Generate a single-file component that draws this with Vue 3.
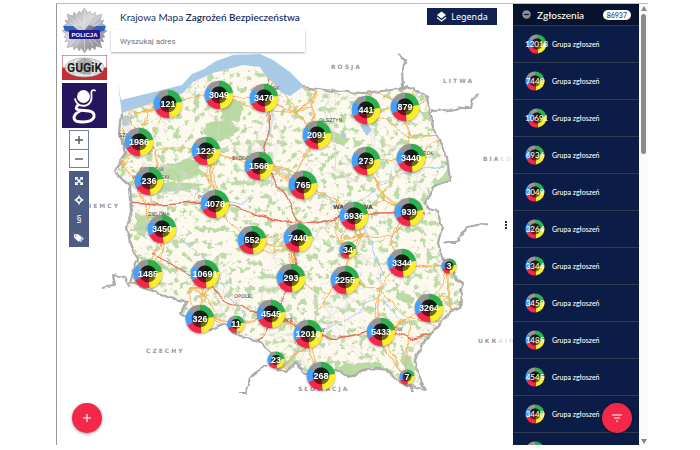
<template>
  <div class="page">
    <div class="frame">
      <!-- Mapa -->
      <main class="map">
        <svg class="map-canvas" viewBox="57 4 456 441" preserveAspectRatio="xMinYMin slice">
          <defs>
            <symbol id="pie" viewBox="-15 -15 30 30">
              <path v-for="part in slices" :key="part.color" :d="part.d" :fill="part.color" />
              <circle r="8.4" fill="#000" opacity="0.55" />
              <path :d="arc(-55, 80, 8.4)" fill="#000" opacity="0.55" />
              <circle r="4.5" fill="#000" opacity="0.45" />
            </symbol>
            <clipPath id="land"><path :d="COUNTRY" /></clipPath>
            <filter id="rough" x="-5%" y="-5%" width="110%" height="110%">
              <feTurbulence type="fractalNoise" baseFrequency="0.12" numOctaves="2" seed="4" />
              <feDisplacementMap in="SourceGraphic" scale="5" xChannelSelector="R" yChannelSelector="G" />
            </filter>
            <filter id="wavy" x="-5%" y="-5%" width="110%" height="110%">
              <feTurbulence type="fractalNoise" baseFrequency="0.05" numOctaves="2" seed="8" />
              <feDisplacementMap in="SourceGraphic" scale="10" xChannelSelector="R" yChannelSelector="G" />
            </filter>
            <filter id="forest" x="0" y="0" width="100%" height="100%" color-interpolation-filters="sRGB">
              <feTurbulence type="fractalNoise" baseFrequency="0.15" numOctaves="5" seed="11" />
              <feColorMatrix values="0 0 0 0 0.74  0 0 0 0 0.86  0 0 0 0 0.66  9 0 0 0 -4.9" />
            </filter>
          </defs>

          <!-- Morze i ląd -->
          <path
            class="sea"
            d="M118 82L121 100L150 93L182 85L192 74L204 69L216 61L233 55L260 54L273 60L290 72L305 87L304 96L280 100L240 90L180 100L122 116Z"
          />
          <path class="land" :d="COUNTRY" />
          <g clip-path="url(#land)">
            <g filter="url(#rough)">
              <path v-for="(d, index) in WOODS" :key="index" class="wood" :d="d" />
            </g>
            <rect x="110" y="50" width="360" height="345" filter="url(#forest)" />
            <g filter="url(#wavy)">
              <path v-for="(d, index) in RIVERS" :key="index" class="river" :d="d" />
              <path class="lake" d="M124 118L132 117L134 124L128 128L123 124ZM360 126L368 124L372 132L366 138ZM340 132L345 136L342 140Z" />
              <path class="minor" :d="minorRoads" />
              <path class="road" :d="roads" />
              <path v-for="(d, index) in HIGHWAYS" :key="index" class="highway" :d="d" />
            </g>
          </g>

          <!-- Granice -->
          <g filter="url(#rough)">
            <path v-for="(d, index) in BORDERS" :key="index" class="border" :d="d" />
          </g>

          <!-- Nazwy -->
          <text v-for="item in COUNTRIES" :key="item.name" class="country" :x="item.x" :y="item.y">{{ item.name }}</text>
          <text
            v-for="item in CITIES"
            :key="item.name"
            class="city"
            :class="{ capital: item.capital }"
            :x="item.x"
            :y="item.y"
          >{{ item.name }}</text>

          <!-- Znaczniki -->
          <g v-for="item in MARKERS" :key="item[2]" class="marker">
            <use
              href="#pie"
              :x="item[0] - (item[3] || 15)"
              :y="item[1] - (item[3] || 15)"
              :width="(item[3] || 15) * 2"
              :height="(item[3] || 15) * 2"
            />
            <text :x="item[0]" :y="item[1] + 3">{{ item[2] }}</text>
          </g>
        </svg>

        <div class="overlay">
          <div class="left">
            <!-- Policja -->
            <svg class="logo-police" viewBox="0 0 45 45" role="img" aria-label="Policja">
              <defs>
                <linearGradient id="silver" x1="0" y1="0" x2="1" y2="1">
                  <stop offset="0" stop-color="#8d9096" />
                  <stop offset="0.4" stop-color="#d9dbde" />
                  <stop offset="0.65" stop-color="#a4a6ac" />
                  <stop offset="1" stop-color="#75787e" />
                </linearGradient>
              </defs>
              <path
                fill="url(#silver)"
                stroke="#9fa2a8"
                stroke-width="0.5"
                d="M22.5 0L26 5L28 3L30 7L33 4L34 8L40 6L38 13L42 12L40 16L43 17L41 20L45 23L41 26L43 29L40 30L42 34L38 33L40 40L34 38L33 42L30 39L28 43L26 40L22.5 45L19 40L17 43L15 39L12 42L11 38L5 40L7 33L3 34L5 30L2 29L4 26L0 23L4 20L2 17L5 16L3 12L7 13L5 6L11 8L12 4L15 7L17 3L19 5Z"
              />
              <path stroke="#e6e8ea" stroke-width="0.6" fill="none" d="M22.5 1V44M6 7L39 39M39 7L6 39M14 7L31 38M31 7L14 38M7 14L39 32M39 14L7 32" />
              <path fill="#c9ccd1" d="M12 19L19 17L22.5 22L16 23Z" />
              <path fill="#777b82" d="M22.5 22L27 17L33 19L29 23Z" />
              <path fill="#2d62b8" d="M1 18L11 18L17 23L28 23L34 18L44 18L42 23L37 24V30H8V24L3 23Z" />
              <rect x="7" y="22" width="31" height="9" rx="1" fill="#24188a" />
              <text class="police-text" x="22.5" y="29">POLICJA</text>
            </svg>

            <!-- GUGiK -->
            <svg class="logo-gugik" viewBox="0 0 45 25" role="img" aria-label="GUGiK">
              <rect width="45" height="25" fill="#c42e36" />
              <rect x="0.5" y="0.5" width="44" height="12" fill="#fff" />
              <ellipse cx="22.5" cy="12.5" rx="19.5" ry="9.5" fill="#ececec" stroke="#999" stroke-width="0.6" />
              <path fill="none" stroke="#aaa" stroke-width="0.5" d="M3 13H42M6 8H39M6 18H39M22.5 3V22M13 4Q6 13 13 21M32 4Q39 13 32 21" />
              <path fill="#777" d="M15 6L22 3L30 5L31 14L28 20L20 19L14 16Z" opacity="0.5" />
              <text class="gugik-text" x="22.5" y="17">GUGiK</text>
            </svg>

            <!-- Geoportal -->
            <svg class="logo-geo" viewBox="0 0 45 45" role="img" aria-label="Geoportal">
              <rect width="45" height="45" fill="#25155f" />
              <g fill="none" stroke="#fff" stroke-linecap="round">
                <circle cx="21.5" cy="13.5" r="6.5" fill="#fff" stroke="none" />
                <path stroke-width="1.8" d="M33 7.500Q28.500 6 29.500 12Q30.500 20 24 22.500Q15 24 13 16" />
                <path stroke-width="3" d="M16 22Q12 26 17 27L27 28Q33 29 32 34Q30 39 21 39Q12 39 12 35Q12 31 18 28" />
              </g>
            </svg>

            <div class="controls">
              <!-- Zoom -->
              <div class="zoom">
                <button type="button" aria-label="Przybliż">
                  <svg viewBox="0 0 10 10"><path d="M5 1V9M1 5H9" stroke="#555" stroke-width="1.4" /></svg>
                </button>
                <button type="button" aria-label="Oddal">
                  <svg viewBox="0 0 10 10"><path d="M1 5H9" stroke="#555" stroke-width="1.4" /></svg>
                </button>
              </div>

              <!-- Narzędzia -->
              <div class="tools">
                <button type="button" aria-label="Pełny zasięg">
                  <svg viewBox="0 0 10 10">
                    <path d="M1 1H4.3L3.3 2.3L5 4L6.7 2.3L5.7 1H9V4.3L7.7 3.3L6 5L7.7 6.7L9 5.7V9H5.7L6.7 7.7L5 6L3.3 7.7L4.3 9H1V5.7L2.3 6.7L4 5L2.3 3.3L1 4.3Z" fill="#fff" />
                  </svg>
                </button>
                <button type="button" aria-label="Moja lokalizacja">
                  <svg viewBox="0 0 10 10">
                    <circle cx="5" cy="5" r="2.3" fill="none" stroke="#fff" stroke-width="1.5" />
                    <path d="M5 0.6V2.6M5 7.4V9.4M0.6 5H2.6M7.4 5H9.4" stroke="#fff" stroke-width="1.6" />
                  </svg>
                </button>
                <button type="button" class="law">§</button>
                <button type="button" aria-label="Kategorie">
                  <svg viewBox="0 0 10 10">
                    <path d="M0 1.2H4L8 5.2L4.6 8.8L0 4.6ZM5.2 1.4L9.8 5.6L6.4 9.2L5.6 8.6L8.7 5.4L4.7 1.4Z" fill="#fff" />
                    <circle cx="1.8" cy="2.9" r="0.7" fill="#4d5c83" />
                  </svg>
                </button>
              </div>
            </div>
          </div>

          <div class="heading">
            <h1>Krajowa Mapa <b>Zagrożeń Bezpieczeństwa</b></h1>
            <input v-model="address" class="search" type="text" placeholder="Wyszukaj adres" aria-label="Wyszukaj adres" />
          </div>

          <button type="button" class="legend">
            <svg viewBox="0 0 12 12">
              <path d="M6 0.5L11 4.4L6 8.3L1 4.4Z" fill="#fff" />
              <path d="M1 7L6 10.9L11 7" fill="none" stroke="#fff" stroke-width="1.3" />
            </svg>
            Legenda
          </button>
        </div>

        <button type="button" class="fab fab-add" aria-label="Dodaj zgłoszenie">
          <svg viewBox="0 0 10 10"><path d="M5 1V9M1 5H9" stroke="#fff" stroke-width="1.2" /></svg>
        </button>

        <div class="splitter"><i></i><i></i><i></i></div>
      </main>
      <!-- Mapa -->

      <!-- Zgłoszenia -->
      <aside class="panel">
        <header class="panel-header">
          <svg viewBox="0 0 10 10">
            <circle cx="5" cy="5" r="4.7" fill="#8b8f98" />
            <path d="M2.4 5H7.6" stroke="#07122d" stroke-width="1.4" />
          </svg>
          <h2>Zgłoszenia</h2>
          <span class="count">86937</span>
        </header>
        <ul class="list">
          <li v-for="group in GROUPS" :key="group" class="row">
            <span class="badge">
              <svg viewBox="-15 -15 30 30"><use href="#pie" x="-15" y="-15" width="30" height="30" /></svg>
              <b>{{ group }}</b>
            </span>
            Grupa zgłoszeń
          </li>
        </ul>
        <button type="button" class="fab fab-filter" aria-label="Filtruj">
          <svg viewBox="0 0 10 10"><path d="M0 2H10M2 5H8M4 8H6" stroke="#fff" stroke-width="1" /></svg>
        </button>
      </aside>
      <!-- Zgłoszenia -->

      <!-- Pasek przewijania -->
      <div class="scroll">
        <svg viewBox="0 0 6 5"><path d="M3 0L6 5H0Z" fill="#888" /></svg>
        <div class="thumb"></div>
        <svg class="down" viewBox="0 0 6 5"><path d="M0 0H6L3 5Z" fill="#888" /></svg>
      </div>
    </div>
  </div>
</template>

<script setup>
import { ref } from "vue";

const address = ref("");

// x, y, liczba zgłoszeń, promień
const MARKERS = [
  [168, 104, 121],
  [219, 95, 3049],
  [264, 98, 3470],
  [366, 110, 441],
  [405, 107, 879],
  [139, 142, 1986],
  [206, 151, 1223],
  [317, 135, 2091],
  [366, 161, 273],
  [411, 158, 3440],
  [259, 166, 1568],
  [149, 181, 236],
  [303, 185, 765],
  [215, 204, 4078],
  [354, 216, 6936],
  [409, 212, 939],
  [162, 229, 3450],
  [252, 240, 552],
  [298, 238, 7440],
  [348, 250, 34, 9],
  [402, 263, 3344],
  [449, 266, 3, 8],
  [148, 274, 1485],
  [205, 274, 10691],
  [291, 278, 293],
  [345, 280, 2255],
  [429, 308, 3264],
  [200, 319, 326],
  [236, 324, 11, 9],
  [271, 314, 4545],
  [308, 334, 12018],
  [381, 332, 5433],
  [276, 360, 23, 9],
  [321, 376, 268],
  [407, 377, 7, 8],
];

const GROUPS = [12018, 7440, 10691, 6936, 3049, 3264, 3344, 3450, 1485, 4545, 3440, 2255];

const COUNTRIES = [
  { name: "ROSJA", x: 331, y: 69 },
  { name: "LITWA", x: 443, y: 83 },
  { name: "BIAŁO", x: 483, y: 161 },
  { name: "NIEMCY", x: 82, y: 208 },
  { name: "CZECHY", x: 146, y: 353 },
  { name: "SŁOWACJA", x: 298, y: 391 },
  { name: "UKRAIN", x: 478, y: 343 },
];

const CITIES = [
  { name: "OLSZTYN", x: 319, y: 122 },
  { name: "BYDGOSZCZ", x: 232, y: 160 },
  { name: "GORZÓW", x: 140, y: 171 },
  { name: "WIELKOPOLSKI", x: 132, y: 179 },
  { name: "SZCZECIN", x: 119, y: 137 },
  { name: "WARSZAWA", x: 333, y: 209, capital: true },
  { name: "POZNAŃ", x: 198, y: 199 },
  { name: "ZIELONA", x: 148, y: 216 },
  { name: "OPOLE", x: 234, y: 298 },
  { name: "GDAŃSK", x: 258, y: 90 },
  { name: "BIAŁYSTOK", x: 406, y: 155 },
  { name: "KATOWICE", x: 267, y: 322 },
  { name: "KRAKÓW", x: 303, y: 332 },
  { name: "RZESZÓW", x: 377, y: 331 },
];

// Kontur
const COAST = "M122 113L155 102L183 93L193 82L213 73L243 65L260 67L265 75L270 80L277 87L282 93L290 96L303 87";
const EDGE =
  "L333 91L363 93L400 89L407 86L413 89L427 97L430 110L433 127L440 140L447 157L450 180L433 188L425 203L428 209L437 211L442 227L438 243L443 260L453 270L457 280L463 284L460 290L463 300L460 308L452 311L437 327L423 343L415 360L418 373L425 390L412 387L400 382L387 370L370 368L350 377L337 370L320 377L303 373L296 362L287 372L278 370L272 353L260 343L247 337L235 335L225 323L210 330L190 323L180 312L188 302L170 298L150 290L130 282L137 260L130 243L127 227L132 213L130 187L115 172L125 153L120 133L122 113";
const COUNTRY = `${COAST}${EDGE}Z`;

const BORDERS = [
  `M303 87${EDGE}`,
  "M398 54L406 60L402 70L403 87",
  "M432 111L450 110L462 108L470 108L472 100L478 95",
  "M443 242L457 242L467 227L488 223",
  "M102 287L115 285L113 275L125 277L130 287",
  "M267 365L250 378L245 393L239 393",
  "M412 387V392",
];

const HIGHWAYS = [
  "M127 203L160 205L200 203L228 206L255 215L298 225L320 222L354 213L380 213L425 212",
  "M268 75L267 110L268 140L262 166L285 195L300 225L297 255L290 290L270 322L258 342",
  "M152 254L175 265L205 280L225 300L250 312L271 314L308 336L345 338L381 330L410 340L430 335",
];

const RIVERS = [
  "M130 187L160 187L195 188L215 200L240 205L255 195",
  "M270 95L270 130L262 155L280 172L300 185L330 200L354 212L370 240L382 270L380 295L355 315L325 330L300 335",
  "M132 230L165 228L195 250L215 270L232 298L245 320",
  "M354 205L375 190L395 175L425 170L447 165",
  "M382 295L405 325",
];

const WOODS = [
  "M225 95L245 105L238 122L220 118Z",
  "M205 124L228 118L240 130L220 142L204 134Z",
  "M165 165L190 158L205 172L180 182L162 176Z",
  "M140 186L170 182L205 184L190 190L150 193Z",
  "M135 212L150 220L146 238L135 232Z",
  "M135 255L160 262L172 270L150 268Z",
  "M418 110L429 112L432 122L424 120Z",
  "M448 168L449 182L434 187Z",
  "M395 290L415 298L412 305L398 300Z",
  "M330 372L345 364L375 362L395 372L385 376L350 376Z",
  "M402 355L412 356L415 374L404 370Z",
  "M330 130L350 138L345 146L332 142Z",
  "M280 364L292 356L302 365L298 372Z",
];

// Drogi
const minorRoads = ref("");
const roads = ref("");

let seed = 17;
const random = () => {
  seed = (seed * 16807) % 2147483647;
  return seed / 2147483647;
};

const connect = (nodes, count) => {
  return nodes
    .map(([x, y]) => {
      return [...nodes]
        .sort((a, b) => Math.hypot(a[0] - x, a[1] - y) - Math.hypot(b[0] - x, b[1] - y))
        .slice(1, count + 1)
        .map(([x2, y2]) => {
          const mx = (x + x2) / 2 + (random() - 0.5) * 9;
          const my = (y + y2) / 2 + (random() - 0.5) * 9;
          return `M${x} ${y}Q${mx.toFixed(1)} ${my.toFixed(1)} ${x2} ${y2}`;
        })
        .join("");
    })
    .join("");
};

const scatter = (count) => {
  return Array.from({ length: count }, () => [Math.round(120 + random() * 340), Math.round(70 + random() * 310)]);
};

roads.value = connect([...MARKERS, ...scatter(56)], 3);
minorRoads.value = connect(scatter(110), 3);

// Wykres kołowy
const arc = (from, to, r) => {
  const point = (deg) => {
    const rad = ((deg - 90) * Math.PI) / 180;
    return `${(Math.cos(rad) * r).toFixed(2)} ${(Math.sin(rad) * r).toFixed(2)}`;
  };
  return `M0 0L${point(from)}A${r} ${r} 0 0 1 ${point(to)}Z`;
};

const slices = [
  { color: "#2fb04f", d: arc(0, 82, 14.2) },
  { color: "#fbee2b", d: arc(82, 174, 14.2) },
  { color: "#f5284a", d: arc(174, 244, 14.2) },
  { color: "#459ffb", d: arc(244, 305, 14.2) },
  { color: "#979797", d: arc(305, 360, 14.2) },
];
</script>

<style>
body {
  margin: 0;
  background-color: #fff;
}
</style>

<style scoped>
.page {
  height: 100vh;
  padding: 3px 52px 5px 56px;
  box-sizing: border-box;
  font-family: Lato, "Open Sans", sans-serif;
}
.frame {
  display: grid;
  grid-template-columns: minmax(0, 1fr) 126px 9px;
  height: 100%;
  border-top: 1px solid #bbb;
  border-left: 1px solid #999;
  box-sizing: border-box;
}
button {
  display: flex;
  align-items: center;
  justify-content: center;
  padding: 0;
  border: none;
  cursor: pointer;
}

/* Mapa */
.map {
  position: relative;
  overflow: hidden;
}
.map-canvas {
  position: absolute;
  inset: 0;
  width: 100%;
  height: 100%;
}
.sea {
  fill: #a9cae6;
}
.land {
  fill: #fef9ee;
}
.wood {
  fill: #b9d8a2;
}
.lake {
  fill: #a9cae6;
}
.river,
.minor,
.road,
.highway,
.border {
  fill: none;
  stroke-linejoin: round;
}
.river {
  stroke: #aecbf0;
  stroke-width: 1;
}
.minor {
  stroke: #dcd9d3;
  stroke-width: 0.5;
}
.road {
  stroke: #fbb04f;
  stroke-width: 0.9;
}
.highway {
  stroke: #ea6a55;
  stroke-width: 1.3;
}
.border {
  stroke: #acacac;
  stroke-width: 2.2;
}
.country {
  fill: #999;
  font: bold 6px "DejaVu Sans", sans-serif;
  letter-spacing: 2px;
}
.city {
  fill: #444;
  font: 5px "DejaVu Sans", sans-serif;
}
.capital {
  font-size: 6px;
  font-weight: bold;
}
.marker {
  filter: drop-shadow(0 1px 1px rgba(0, 0, 0, 0.35));
}
.marker text {
  fill: #fff;
  font: bold 9px "Liberation Sans", sans-serif;
  text-anchor: middle;
}

/* Nakładka */
.overlay {
  position: relative;
  display: flex;
  align-items: flex-start;
  padding: 4px 16px 0 5px;
}
.left {
  display: flex;
  flex-direction: column;
  width: 45px;
  margin-right: 4px;
}
.logo-police {
  width: 45px;
  height: 45px;
}
.police-text {
  fill: #fff;
  font: bold 6px "Liberation Sans", sans-serif;
  text-anchor: middle;
}
.logo-gugik {
  width: 45px;
  height: 25px;
  margin: 2px 0 3px;
}
.gugik-text {
  fill: #1c1c1c;
  font: bold 12px Roboto, sans-serif;
  text-anchor: middle;
}
.logo-geo {
  width: 45px;
  height: 45px;
}

/* Przyciski */
.controls {
  align-self: flex-start;
  margin: 2px 0 0 7px;
}
.zoom {
  border: 1px solid #73809f;
}
.zoom button {
  width: 18px;
  height: 18px;
  background-color: #fff;
}
.zoom button + button {
  border-top: 1px solid #73809f;
}
.zoom svg,
.tools svg {
  width: 10px;
  height: 10px;
}
.tools {
  margin-top: 3px;
  background-color: #4d5c83;
}
.tools button {
  width: 20px;
  height: 19px;
  background: none;
}
.tools .law {
  color: #fff;
  font: 10px "Open Sans", sans-serif;
}

/* Nagłówek */
.heading {
  width: 194px;
}
h1 {
  margin: 0;
  padding-left: 9px;
  line-height: 18px;
  color: #1c2f59;
  font-size: 10px;
  font-weight: 400;
  white-space: nowrap;
}
h1 b {
  font-weight: 600;
}
.search {
  width: 100%;
  height: 22px;
  margin-top: 4px;
  padding: 0 9px;
  border: none;
  font: 8px Roboto, sans-serif;
  background-color: #fff;
  box-shadow: 0 1px 2px rgba(0, 0, 0, 0.35);
  box-sizing: border-box;
}
.search::placeholder {
  color: #757575;
  opacity: 1;
}
.legend {
  gap: 4px;
  width: 70px;
  height: 17px;
  margin-left: auto;
  color: #fff;
  font: 9px "Noto Sans", sans-serif;
  background-color: #10214f;
}
.legend svg {
  width: 11px;
  height: 11px;
}

/* Okrągłe przyciski */
.fab {
  position: absolute;
  bottom: 12px;
  width: 30px;
  height: 30px;
  border-radius: 50%;
  background-color: #f5284a;
  box-shadow: 0 1px 3px rgba(0, 0, 0, 0.4);
}
.fab svg {
  width: 10px;
  height: 10px;
}
.fab-add {
  left: 15px;
}
.fab-filter {
  right: 7px;
}

/* Uchwyt */
.splitter {
  position: absolute;
  top: 0;
  right: 0;
  bottom: 0;
  display: flex;
  flex-direction: column;
  align-items: center;
  justify-content: center;
  gap: 1px;
  width: 15px;
  background-color: rgba(255, 255, 255, 0.7);
}
.splitter i {
  width: 2px;
  height: 2px;
  background-color: #333;
}

/* Zgłoszenia */
.panel {
  position: relative;
  overflow: hidden;
  color: #fff;
  background-color: #0b1c46;
}
.panel-header {
  display: flex;
  align-items: center;
  height: 21px;
  padding: 0 8px 0 9px;
  background-color: #07122d;
  box-sizing: border-box;
}
.panel-header svg {
  width: 9px;
  height: 9px;
}
h2 {
  margin: 0 0 0 6px;
  font-size: 10px;
  font-weight: 500;
}
.count {
  height: 10px;
  line-height: 10px;
  margin-left: auto;
  padding: 0 4px;
  border-radius: 5px;
  color: #2b4a7e;
  font-size: 7px;
  font-weight: 600;
  background-color: #fff;
}
.list {
  margin: 0;
  padding: 0;
  list-style: none;
}
.row {
  display: flex;
  align-items: center;
  height: 37px;
  padding-left: 12px;
  border-top: 1px solid #303a50;
  font-size: 7px;
  font-weight: 500;
  box-sizing: border-box;
}
.badge {
  display: grid;
  place-items: center;
  width: 20px;
  height: 20px;
  margin-right: 7px;
}
.badge svg,
.badge b {
  grid-area: 1 / 1;
}
.badge svg {
  width: 20px;
  height: 20px;
}
.badge b {
  position: relative;
  font-size: 8px;
  font-weight: 500;
}

/* Pasek przewijania */
.scroll {
  display: flex;
  flex-direction: column;
  align-items: center;
  padding: 2px 0 1px;
  background-color: #fafafa;
}
.scroll svg {
  width: 6px;
  height: 5px;
}
.thumb {
  width: 5px;
  height: 140px;
  margin-top: 3px;
  border-radius: 3px;
  background-color: #8b8b8b;
}
.scroll .down {
  margin-top: auto;
}
</style>
